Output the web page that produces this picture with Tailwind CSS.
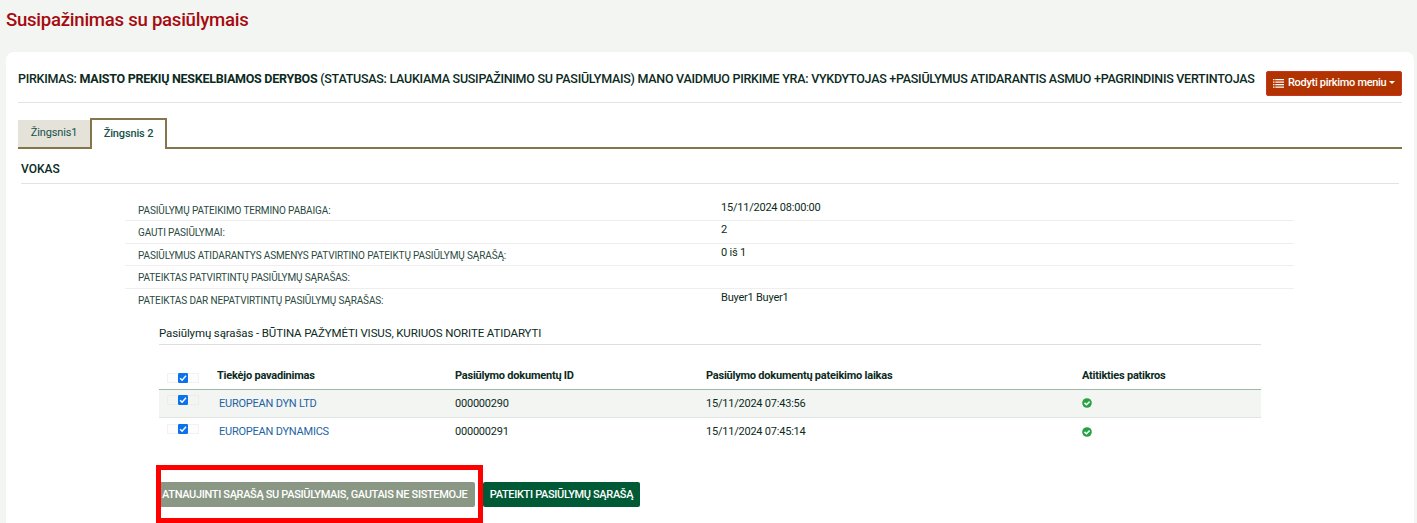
<!DOCTYPE html>
<html lang="lt">
<head>
    <meta charset="UTF-8">
    <meta name="viewport" content="width=device-width, initial-scale=1.0">
    <title>Susipažinimas su pasiūlymais</title>
    <script src="https://cdn.jsdelivr.net/npm/@tailwindcss/browser@4"></script>
</head>
<body class="h-[523px] overflow-hidden bg-[#f3f5f2] font-['Roboto',sans-serif] text-[11px] tracking-[-0.22px] text-[#0b2b22] flex flex-col">
    <h1 class="h-[52px] shrink-0 pl-[6px] pt-[6px] text-[18.6px] leading-[28px] tracking-[-0.27px] font-medium text-[#a50b10] whitespace-nowrap">Susipažinimas su pasiūlymais</h1>

    <main class="grow ml-[6px] mr-[3px] pl-3 pr-[12px] bg-white rounded-t-lg whitespace-nowrap">
        <!-- Pirkimo antraštė -->
        <div class="h-[51px] border-b border-[#e3e4df] flex justify-between">
            <h2 class="mt-[17px] text-[12.5px] leading-[20px] tracking-[-0.263px] font-medium">PIRKIMAS: <b class="font-bold">MAISTO PREKIŲ NESKELBIAMOS DERYBOS</b> (STATUSAS: LAUKIAMA SUSIPAŽINIMO SU PASIŪLYMAIS) MANO VAIDMUO PIRKIME YRA: VYKDYTOJAS +PASIŪLYMUS ATIDARANTIS ASMUO +PAGRINDINIS VERTINTOJAS</h2>
            <button class="mt-[19px] w-[136px] h-[25px] shrink-0 pl-[6px] rounded-[2px] bg-[#b13400] border border-[#cc3322] text-white tracking-[-0.3px] font-medium flex items-center">
                <svg class="w-[11px] h-[9px] mr-[4px]" viewBox="0 0 11 9" fill="#fff">
                    <path d="M0 0h1.5v1.3H0zM2.3 0H11v1.3H2.3zM0 2.5h1.5v1.3H0zM2.3 2.5H11v1.3H2.3zM0 5h1.5v1.3H0zM2.3 5H11v1.3H2.3zM0 7.5h1.5v1.3H0zM2.3 7.5H11v1.3H2.3z" />
                </svg>
                Rodyti pirkimo meniu
                <svg class="w-[6px] h-[3px] ml-[3px] -mt-[2px]" viewBox="0 0 6 3" fill="#fff"><path d="M0 0h6L3 3z" /></svg>
            </button>
        </div>

        <!-- Žingsniai -->
        <div class="mt-[15px] h-[31px] flex items-end tracking-[-0.15px] text-[#14524a]">
            <div class="w-[72px] h-[29px] bg-[#e5e2da] border-b-2 border-[#84754a] flex items-center justify-center">Žingsnis1</div>
            <div class="w-[77px] h-[31px] border-2 border-b-0 border-[#84754a] flex items-center justify-center font-medium">Žingsnis 2</div>
            <div class="grow border-b-2 border-[#84754a]"></div>
        </div>

        <section class="mx-[3px]">
            <h3 class="h-[35px] pt-[10px] border-b border-[#e3e3e3] text-[12px] leading-[20px] tracking-normal font-medium">VOKAS</h3>

            <dl class="mt-[14px] ml-[104px] w-[1169px] leading-[16px]">
                <div class="h-[23px] border-b border-[#eeeeee] flex">
                    <dt class="w-[596px] pl-[13px] pt-[5px] text-[10px] leading-[16px] tracking-[-0.13px] text-[#2b4a41]">PASIŪLYMŲ PATEIKIMO TERMINO PABAIGA:</dt>
                    <dd class="pt-[2px]">15/11/2024 08:00:00</dd>
                </div>
                <div class="h-[23px] border-b border-[#eeeeee] flex">
                    <dt class="w-[596px] pl-[13px] pt-[4px] text-[10px] leading-[16px] tracking-[-0.13px] text-[#2b4a41]">GAUTI PASIŪLYMAI:</dt>
                    <dd class="pt-[1px]">2</dd>
                </div>
                <div class="h-[22px] border-b border-[#eeeeee] flex">
                    <dt class="w-[596px] pl-[13px] pt-[4px] text-[10px] leading-[16px] tracking-[-0.13px] text-[#2b4a41]">PASIŪLYMUS ATIDARANTYS ASMENYS PATVIRTINO PATEIKTŲ PASIŪLYMŲ SĄRAŠĄ:</dt>
                    <dd class="pt-[1px]">0 iš 1</dd>
                </div>
                <div class="h-[23px] border-b border-[#eeeeee] flex">
                    <dt class="w-[596px] pl-[13px] pt-[4px] text-[10px] leading-[16px] tracking-[-0.13px] text-[#2b4a41]">PATEIKTAS PATVIRTINTŲ PASIŪLYMŲ SĄRAŠAS:</dt>
                    <dd></dd>
                </div>
                <div class="h-[23px] flex">
                    <dt class="w-[596px] pl-[13px] pt-[4px] text-[10px] leading-[16px] tracking-[-0.13px] text-[#2b4a41]">PATEIKTAS DAR NEPATVIRTINTŲ PASIŪLYMŲ SĄRAŠAS:</dt>
                    <dd class="pt-[1px]">Buyer1 Buyer1</dd>
                </div>
            </dl>

            <div class="ml-[138px] w-[1102px]">
                <h4 class="mt-[12px] h-[21px] border-b border-[#dedede] text-[11.5px] leading-[18px] tracking-[-0.12px]">Pasiūlymų sąrašas - BŪTINA PAŽYMĖTI VISUS, KURIUOS NORITE ATIDARYTI</h4>

                <table class="mt-[15px] w-full table-fixed border-separate border-spacing-0 text-left leading-[16px]">
                    <colgroup>
                        <col class="w-[58px]">
                        <col class="w-[238px]">
                        <col class="w-[251px]">
                        <col class="w-[376px]">
                        <col>
                    </colgroup>
                    <thead>
                        <tr class="h-[30px] align-top font-bold">
                            <th class="pl-2 pt-[13px] border-b border-[#9db8a9]">
                                <div class="w-[32px] h-[10px] bg-[#fdfdfd] border border-[#f1f3f1] flex justify-center items-center">
                                    <svg class="w-[10px] h-[10px] shrink-0" viewBox="0 0 10 10"><rect width="10" height="10" rx="1.2" fill="#0b72ee" /><path d="M2.1 5.3l2 2L8 2.8" fill="none" stroke="#fff" stroke-width="1.4" /></svg>
                                </div>
                            </th>
                            <th class="pt-[8px] border-b border-[#9db8a9]">Tiekėjo pavadinimas</th>
                            <th class="pt-[8px] border-b border-[#9db8a9]">Pasiūlymo dokumentų ID</th>
                            <th class="pt-[8px] border-b border-[#9db8a9]">Pasiūlymo dokumentų pateikimo laikas</th>
                            <th class="pt-[8px] border-b border-[#9db8a9]">Atitikties patikros</th>
                        </tr>
                    </thead>
                    <tbody>
                        <tr class="h-[28px] align-top bg-[#f3f5f2]">
                            <td class="pl-2 pt-[5px] border-b border-[#dfe5e0]">
                                <div class="w-[32px] h-[10px] border border-[#eaeeea] flex justify-center items-center">
                                    <svg class="w-[10px] h-[10px] shrink-0" viewBox="0 0 10 10"><rect width="10" height="10" rx="1.2" fill="#0b72ee" /><path d="M2.1 5.3l2 2L8 2.8" fill="none" stroke="#fff" stroke-width="1.4" /></svg>
                                </div>
                            </td>
                            <td class="pt-[6px] pl-[2px] border-b border-[#dfe5e0]"><a class="text-[#1d63a5]">EUROPEAN DYN LTD</a></td>
                            <td class="pt-[6px] border-b border-[#dfe5e0]">000000290</td>
                            <td class="pt-[6px] border-b border-[#dfe5e0]">15/11/2024 07:43:56</td>
                            <td class="pt-[8px] border-b border-[#dfe5e0]">
                                <svg class="w-[10px] h-[10px]" viewBox="0 0 10 10"><circle cx="5" cy="5" r="4.8" fill="#27a243" /><path d="M2.5 4.9l1.9 1.9 3.2-3.2" fill="none" stroke="#fff" stroke-width="1.5" /></svg>
                            </td>
                        </tr>
                        <tr class="h-[29px] align-top">
                            <td class="pl-2 pt-[6px]">
                                <div class="w-[32px] h-[10px] bg-[#fdfdfd] border border-[#f1f3f1] flex justify-center items-center">
                                    <svg class="w-[10px] h-[10px] shrink-0" viewBox="0 0 10 10"><rect width="10" height="10" rx="1.2" fill="#0b72ee" /><path d="M2.1 5.3l2 2L8 2.8" fill="none" stroke="#fff" stroke-width="1.4" /></svg>
                                </div>
                            </td>
                            <td class="pt-[6px] pl-[2px]"><a class="text-[#1d63a5]">EUROPEAN DYNAMICS</a></td>
                            <td class="pt-[6px]">000000291</td>
                            <td class="pt-[6px]">15/11/2024 07:45:14</td>
                            <td class="pt-[9px]">
                                <svg class="w-[10px] h-[10px]" viewBox="0 0 10 10"><circle cx="5" cy="5" r="4.8" fill="#27a243" /><path d="M2.5 4.9l1.9 1.9 3.2-3.2" fill="none" stroke="#fff" stroke-width="1.5" /></svg>
                            </td>
                        </tr>
                    </tbody>
                </table>

                <div class="relative mt-[35px] flex gap-[8px] text-white font-medium tracking-[-0.34px]">
                    <button class="w-[317px] h-[25px] -ml-px pl-[4px] pt-px text-left bg-[#8a9785] rounded-[2px]">ATNAUJINTI SĄRAŠĄ SU PASIŪLYMAIS, GAUTAIS NE SISTEMOJE</button>
                    <button class="w-[157px] h-[25px] pt-px bg-[#005a35] rounded-[2px]">PATEIKTI PASIŪLYMŲ SĄRAŠĄ</button>
                    <div class="absolute -left-[3px] -top-[17px] w-[327px] h-[58px] border-[5px] border-[#fe0000]"></div>
                </div>
            </div>
        </section>
    </main>
</body>
</html>
